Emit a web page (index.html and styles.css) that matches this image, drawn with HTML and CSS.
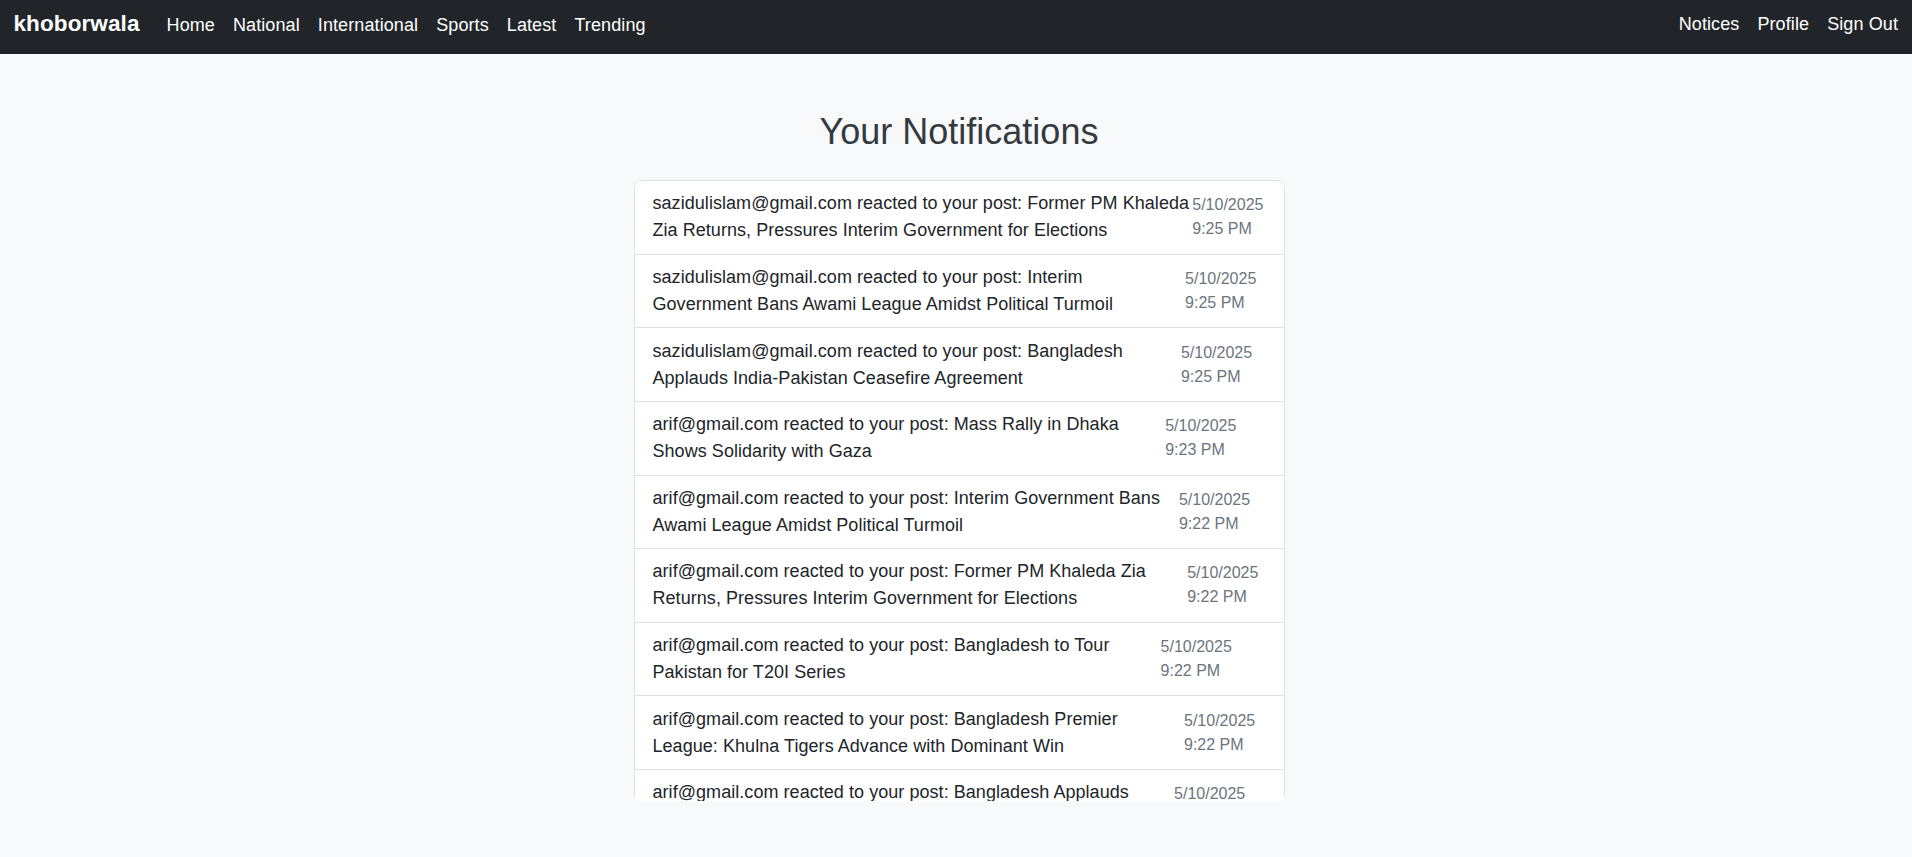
FILE: index.html
```html
<!DOCTYPE html>
<html lang="en">
<head>
<meta charset="utf-8">
<title>khoborwala - Notifications</title>
<link rel="stylesheet" href="styles.css">
</head>
<body>
<nav class="navbar">
  <div class="nav-left">
    <a class="brand" href="#">khoborwala</a>
    <a class="nav-link" href="#">Home</a>
    <a class="nav-link" href="#">National</a>
    <a class="nav-link" href="#">International</a>
    <a class="nav-link" href="#">Sports</a>
    <a class="nav-link" href="#">Latest</a>
    <a class="nav-link" href="#">Trending</a>
  </div>
  <div class="nav-right">
    <a class="nav-link" href="#">Notices</a>
    <a class="nav-link" href="#">Profile</a>
    <a class="nav-link" href="#">Sign Out</a>
  </div>
</nav>

<main class="page">
  <h2 class="title">Your Notifications</h2>
  <ul class="list">
    <li class="item"><div class="msg">sazidulislam@gmail.com reacted to your post: Former PM Khaleda Zia Returns, Pressures Interim Government for Elections</div><small class="time">5/10/2025 9:25 PM</small></li>
    <li class="item"><div class="msg">sazidulislam@gmail.com reacted to your post: Interim Government Bans Awami League Amidst Political Turmoil</div><small class="time">5/10/2025 9:25 PM</small></li>
    <li class="item"><div class="msg">sazidulislam@gmail.com reacted to your post: Bangladesh Applauds India-Pakistan Ceasefire Agreement</div><small class="time">5/10/2025 9:25 PM</small></li>
    <li class="item"><div class="msg">arif@gmail.com reacted to your post: Mass Rally in Dhaka Shows Solidarity with Gaza</div><small class="time">5/10/2025 9:23 PM</small></li>
    <li class="item"><div class="msg">arif@gmail.com reacted to your post: Interim Government Bans Awami League Amidst Political Turmoil</div><small class="time">5/10/2025 9:22 PM</small></li>
    <li class="item"><div class="msg">arif@gmail.com reacted to your post: Former PM Khaleda Zia Returns, Pressures Interim Government for Elections</div><small class="time">5/10/2025 9:22 PM</small></li>
    <li class="item"><div class="msg">arif@gmail.com reacted to your post: Bangladesh to Tour Pakistan for T20I Series</div><small class="time">5/10/2025 9:22 PM</small></li>
    <li class="item"><div class="msg">arif@gmail.com reacted to your post: Bangladesh Premier League: Khulna Tigers Advance with Dominant Win</div><small class="time">5/10/2025 9:22 PM</small></li>
    <li class="item"><div class="msg">arif@gmail.com reacted to your post: Bangladesh Applauds India-Pakistan Ceasefire Agreement</div><small class="time">5/10/2025 9:22 PM</small></li>
    <li class="item"><div class="msg">arif@gmail.com reacted to your post: Mass Rally in Dhaka Shows Solidarity with Gaza</div><small class="time">5/10/2025 9:21 PM</small></li>
  </ul>
</main>
</body>
</html>
```

FILE: styles.css
```css
* {
  box-sizing: border-box;
}

html, body {
  margin: 0;
  padding: 0;
}

body {
  background: #f8f9fa;
  color: #212529;
  font-family: "Liberation Sans", Arial, sans-serif;
  font-size: 18px;
  line-height: 1.5;
}

a {
  text-decoration: none;
}

.navbar {
  height: 54px;
  background: #212529;
  display: flex;
  align-items: center;
  justify-content: space-between;
  padding: 0 5px 5px 13.5px;
  letter-spacing: 0.1px;
}

.nav-left,
.nav-right {
  display: flex;
  align-items: baseline;
}

.brand {
  color: #fff;
  font-weight: 700;
  font-size: 22.5px;
  line-height: 27px;
  margin-right: 18px;
}

.nav-link {
  color: #fff;
  font-size: 18px;
  line-height: 27px;
  padding: 0 9px;
}

.page {
  padding: 56px 0 0 6px;
  display: flex;
  flex-direction: column;
  align-items: center;
}

.title {
  margin: 0 0 27px;
  font-size: 36px;
  font-weight: 500;
  line-height: 1.2;
  color: #343a40;
}

.list {
  list-style: none;
  margin: 0;
  padding: 0;
  width: 651px;
  max-height: 621px;
  overflow-y: auto;
  scrollbar-width: none;
  border-radius: 6.75px;
}

.item {
  display: flex;
  justify-content: space-between;
  align-items: center;
  background: #fff;
  border: 1px solid #dee2e6;
  border-top-width: 0;
  padding: 9.3px 18px;
}

.item:first-child {
  border-top-width: 1px;
  border-top-left-radius: 6.75px;
  border-top-right-radius: 6.75px;
}

.msg {
  color: #212529;
  letter-spacing: 0.05px;
}

.time {
  font-size: 16px;
  line-height: 24px;
  color: #6c757d;
}
```
